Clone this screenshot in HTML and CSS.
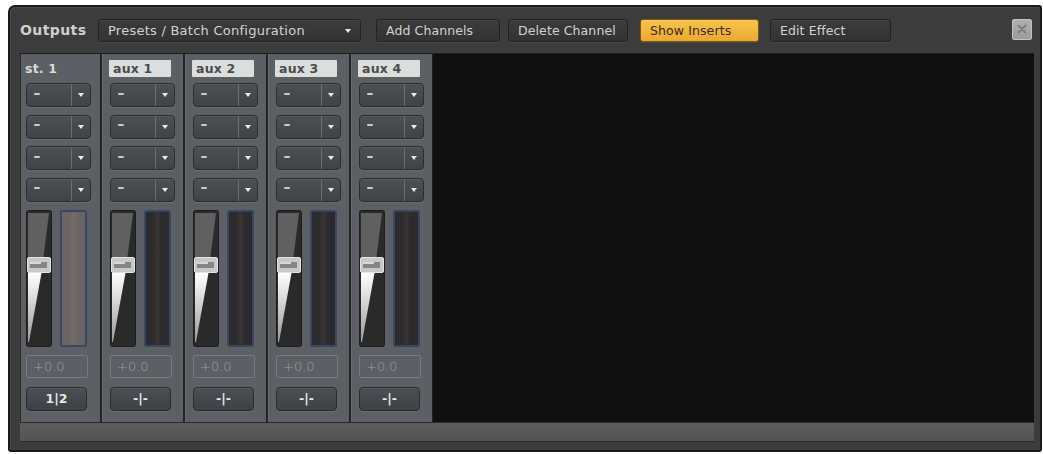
FILE: index.html
```html
<!DOCTYPE html>
<html>
<head>
<meta charset="utf-8">
<link rel="stylesheet" href="styles.css">
</head>
<body>
<div class="window">
  <div class="header">
    <div class="title">Outputs</div>
    <div class="hbtn presets"><span>Presets / Batch Configuration</span><span class="tri"></span></div>
    <div class="hbtn add">Add Channels</div>
    <div class="hbtn del">Delete Channel</div>
    <div class="hbtn show">Show Inserts</div>
    <div class="hbtn edit">Edit Effect</div>
    <div class="close"><svg width="16" height="16" viewBox="0 0 16 16"><path d="M4.5 4.5 L11.5 11.5 M11.5 4.5 L4.5 11.5" stroke="#7d7d7d" stroke-width="2" stroke-linecap="round"/></svg></div>
  </div>
  <div class="main">
    <div class="strips">
      <div class="strip first">
        <div class="label plain">st. 1</div>
        <div class="dd"><span class="dash"></span><span class="ddarrow"></span></div>
        <div class="dd"><span class="dash"></span><span class="ddarrow"></span></div>
        <div class="dd"><span class="dash"></span><span class="ddarrow"></span></div>
        <div class="dd"><span class="dash"></span><span class="ddarrow"></span></div>
        <div class="fader">
          <svg class="track" width="26" height="137" viewBox="0 0 26 137"><defs><linearGradient id="w1" x1="0" y1="0" x2="0" y2="1"><stop offset="0" stop-color="#ffffff"/><stop offset="1" stop-color="#9a9a9a"/></linearGradient></defs><rect x="0.5" y="0.5" width="25" height="136" rx="2" fill="#2a2a2a" stroke="#1d1d1d"/><polygon points="2,3 23,3 17.5,47 2,47" fill="#606060"/><polygon points="2,63 15.5,63 3,132 2,132" fill="url(#w1)"/><rect x="1.5" y="47.5" width="23" height="15" rx="1.5" fill="#c8c8c8" stroke="#e4e4e4"/><rect x="4" y="52" width="17" height="6" fill="#858585"/><rect x="4" y="52" width="11" height="2" fill="#d8d8d8"/></svg>
          <div class="meter light"><div class="stripe"></div></div>
        </div>
        <div class="val">+0.0</div>
        <div class="btn">1|2</div>
      </div>
      <div class="strip">
        <div class="label">aux 1</div>
        <div class="dd"><span class="dash"></span><span class="ddarrow"></span></div>
        <div class="dd"><span class="dash"></span><span class="ddarrow"></span></div>
        <div class="dd"><span class="dash"></span><span class="ddarrow"></span></div>
        <div class="dd"><span class="dash"></span><span class="ddarrow"></span></div>
        <div class="fader">
          <svg class="track" width="26" height="137" viewBox="0 0 26 137"><defs><linearGradient id="w2" x1="0" y1="0" x2="0" y2="1"><stop offset="0" stop-color="#ffffff"/><stop offset="1" stop-color="#9a9a9a"/></linearGradient></defs><rect x="0.5" y="0.5" width="25" height="136" rx="2" fill="#2a2a2a" stroke="#1d1d1d"/><polygon points="2,3 23,3 17.5,47 2,47" fill="#606060"/><polygon points="2,63 15.5,63 3,132 2,132" fill="url(#w2)"/><rect x="1.5" y="47.5" width="23" height="15" rx="1.5" fill="#c8c8c8" stroke="#e4e4e4"/><rect x="4" y="52" width="17" height="6" fill="#858585"/><rect x="4" y="52" width="11" height="2" fill="#d8d8d8"/></svg>
          <div class="meter"><div class="stripe"></div></div>
        </div>
        <div class="val">+0.0</div>
        <div class="btn">-|-</div>
      </div>
      <div class="strip">
        <div class="label">aux 2</div>
        <div class="dd"><span class="dash"></span><span class="ddarrow"></span></div>
        <div class="dd"><span class="dash"></span><span class="ddarrow"></span></div>
        <div class="dd"><span class="dash"></span><span class="ddarrow"></span></div>
        <div class="dd"><span class="dash"></span><span class="ddarrow"></span></div>
        <div class="fader">
          <svg class="track" width="26" height="137" viewBox="0 0 26 137"><defs><linearGradient id="w3" x1="0" y1="0" x2="0" y2="1"><stop offset="0" stop-color="#ffffff"/><stop offset="1" stop-color="#9a9a9a"/></linearGradient></defs><rect x="0.5" y="0.5" width="25" height="136" rx="2" fill="#2a2a2a" stroke="#1d1d1d"/><polygon points="2,3 23,3 17.5,47 2,47" fill="#606060"/><polygon points="2,63 15.5,63 3,132 2,132" fill="url(#w3)"/><rect x="1.5" y="47.5" width="23" height="15" rx="1.5" fill="#c8c8c8" stroke="#e4e4e4"/><rect x="4" y="52" width="17" height="6" fill="#858585"/><rect x="4" y="52" width="11" height="2" fill="#d8d8d8"/></svg>
          <div class="meter"><div class="stripe"></div></div>
        </div>
        <div class="val">+0.0</div>
        <div class="btn">-|-</div>
      </div>
      <div class="strip">
        <div class="label">aux 3</div>
        <div class="dd"><span class="dash"></span><span class="ddarrow"></span></div>
        <div class="dd"><span class="dash"></span><span class="ddarrow"></span></div>
        <div class="dd"><span class="dash"></span><span class="ddarrow"></span></div>
        <div class="dd"><span class="dash"></span><span class="ddarrow"></span></div>
        <div class="fader">
          <svg class="track" width="26" height="137" viewBox="0 0 26 137"><defs><linearGradient id="w4" x1="0" y1="0" x2="0" y2="1"><stop offset="0" stop-color="#ffffff"/><stop offset="1" stop-color="#9a9a9a"/></linearGradient></defs><rect x="0.5" y="0.5" width="25" height="136" rx="2" fill="#2a2a2a" stroke="#1d1d1d"/><polygon points="2,3 23,3 17.5,47 2,47" fill="#606060"/><polygon points="2,63 15.5,63 3,132 2,132" fill="url(#w4)"/><rect x="1.5" y="47.5" width="23" height="15" rx="1.5" fill="#c8c8c8" stroke="#e4e4e4"/><rect x="4" y="52" width="17" height="6" fill="#858585"/><rect x="4" y="52" width="11" height="2" fill="#d8d8d8"/></svg>
          <div class="meter"><div class="stripe"></div></div>
        </div>
        <div class="val">+0.0</div>
        <div class="btn">-|-</div>
      </div>
      <div class="strip">
        <div class="label">aux 4</div>
        <div class="dd"><span class="dash"></span><span class="ddarrow"></span></div>
        <div class="dd"><span class="dash"></span><span class="ddarrow"></span></div>
        <div class="dd"><span class="dash"></span><span class="ddarrow"></span></div>
        <div class="dd"><span class="dash"></span><span class="ddarrow"></span></div>
        <div class="fader">
          <svg class="track" width="26" height="137" viewBox="0 0 26 137"><defs><linearGradient id="w5" x1="0" y1="0" x2="0" y2="1"><stop offset="0" stop-color="#ffffff"/><stop offset="1" stop-color="#9a9a9a"/></linearGradient></defs><rect x="0.5" y="0.5" width="25" height="136" rx="2" fill="#2a2a2a" stroke="#1d1d1d"/><polygon points="2,3 23,3 17.5,47 2,47" fill="#606060"/><polygon points="2,63 15.5,63 3,132 2,132" fill="url(#w5)"/><rect x="1.5" y="47.5" width="23" height="15" rx="1.5" fill="#c8c8c8" stroke="#e4e4e4"/><rect x="4" y="52" width="17" height="6" fill="#858585"/><rect x="4" y="52" width="11" height="2" fill="#d8d8d8"/></svg>
          <div class="meter"><div class="stripe"></div></div>
        </div>
        <div class="val">+0.0</div>
        <div class="btn">-|-</div>
      </div>
      <div class="empty"></div>
    </div>
    <div class="bottombar"></div>
  </div>
</div>
</body>
</html>
```
FILE: styles.css
```css
* { box-sizing: border-box; }
html, body { margin: 0; padding: 0; }
body {
  background: #ffffff;
  width: 1043px;
  height: 454px;
  overflow: hidden;
  font-family: "DejaVu Sans", "Liberation Sans", sans-serif;
}
.window {
  margin: 5px 0 0 8px;
  width: 1034px;
  height: 447px;
  background: #3c3c3c;
  border: 2px solid #1a1a1a;
  border-radius: 7px 3px 3px 3px;
  display: flex;
  flex-direction: column;
  box-shadow: inset 1px 1px 0 #4a4a4a;
}
.header {
  height: 46px;
  flex: none;
  display: flex;
  align-items: center;
  padding-left: 10px;
  padding-right: 6px;
}
.title {
  width: 78px;
  font-weight: bold;
  font-size: 14px;
  color: #cfcfcf;
  letter-spacing: 0.4px;
}
.hbtn {
  height: 23px;
  border: 1px solid #222222;
  border-radius: 3px;
  background: linear-gradient(#3b3b3b, #333333);
  box-shadow: 0 1px 0 rgba(255,255,255,0.07), inset 0 1px 0 rgba(255,255,255,0.04);
  color: #d2d2d2;
  font-size: 12.5px;
  line-height: 21px;
  padding-left: 9px;
  margin-right: 9px;
  white-space: nowrap;
  letter-spacing: 0.1px;
}
.presets {
  width: 263px;
  display: flex;
  justify-content: space-between;
  align-items: center;
  padding-right: 9px;
  margin-right: 15px;
  font-size: 13px;
  letter-spacing: 0.25px;
}
.tri {
  width: 0; height: 0;
  border-left: 3.5px solid transparent;
  border-right: 3.5px solid transparent;
  border-top: 4px solid #e6e6e6;
  margin-top: 2px;
}
.add { width: 124px; margin-right: 8px; }
.del { width: 120px; margin-right: 12px; }
.show {
  width: 119px;
  margin-right: 11px;
  background: linear-gradient(#f8c44c, #eba92f);
  border-color: #7b5a17;
  color: #3b2a0c;
}
.edit { width: 121px; }
.close {
  margin-left: auto;
  margin-right: 2px;
  width: 20px;
  height: 21px;
  background: linear-gradient(#b0b0b0, #9c9c9c);
  border: 1px solid #c2c2c2;
  border-radius: 2px;
  display: flex;
  align-items: center;
  justify-content: center;
  margin-top: -2px;
}
.main {
  margin: 0 6px 0 10px;
  display: flex;
  flex-direction: column;
}
.strips {
  height: 369px;
  display: flex;
  border-top: 1px solid #1c1c1c;
  border-left: 1px solid #2a2a2a;
}
.strip {
  width: 83px;
  flex: none;
  background: #5c6065;
  border-left: 2px solid #222428;
  padding-left: 8px;
  padding-top: 6px;
  display: flex;
  flex-direction: column;
  box-shadow: inset 1px 0 0 #686c71;
}
.strip.first {
  width: 79px;
  border-left: none;
  padding-left: 5px;
  box-shadow: none;
}
.label {
  width: 62px;
  height: 17px;
  margin-left: -1px;
  background: #dcdddd;
  border-radius: 1px;
  color: #4b4b4b;
  font-weight: bold;
  font-size: 12.5px;
  line-height: 17px;
  padding-left: 4px;
  letter-spacing: 0.2px;
}
.label.plain {
  background: transparent;
  color: #d8dadc;
  padding-left: 0;
}
.dd {
  width: 65px;
  height: 24px;
  margin-top: 7.5px;
  border: 1px solid #2b2d30;
  border-radius: 4px;
  background: linear-gradient(#4d5054, #3f4246);
  box-shadow: 0 1px 0 rgba(255,255,255,0.08), inset 0 1px 0 rgba(255,255,255,0.06);
  display: flex;
  align-items: center;
  position: relative;
}
.label + .dd { margin-top: 6px; }
.dash {
  width: 6px;
  height: 2px;
  border-radius: 1px;
  background: #c9cbcd;
  margin-left: 7px;
  margin-top: -3px;
}
.ddarrow {
  margin-left: auto;
  width: 19px;
  height: 100%;
  border-left: 1px solid #6b6e72;
  display: flex;
  align-items: center;
  justify-content: center;
}
.ddarrow::after {
  content: "";
  width: 0; height: 0;
  border-left: 3.5px solid transparent;
  border-right: 3.5px solid transparent;
  border-top: 4px solid #eeeeee;
}
.fader {
  margin-top: 8.5px;
  display: flex;
  gap: 8px;
  height: 137px;
}
.track { display: block; }
.meter {
  width: 27px;
  height: 137px;
  border: 2px solid #394765;
  border-radius: 2px;
  background: #2c2a2d;
  display: flex;
  justify-content: center;
}
.meter .stripe {
  width: 9px;
  background: linear-gradient(90deg, #2c2a2d, #393435, #2c2a2d);
}
.meter.light { background: #6a6462; }
.meter.light .stripe { background: linear-gradient(90deg, #6a6462, #756d6a, #6a6462); }
.val {
  margin-top: 8px;
  width: 62px;
  height: 23px;
  border: 1px solid #777b80;
  border-radius: 2px;
  color: #9a9ea3;
  font-size: 13px;
  line-height: 21px;
  padding-left: 6px;
  font-weight: 300;
}
.btn {
  margin-top: 9px;
  width: 61px;
  height: 24px;
  border: 1px solid #2a2c2f;
  border-radius: 4px;
  background: linear-gradient(#4c4f53, #3d4044);
  box-shadow: 0 1px 0 rgba(255,255,255,0.08), inset 0 1px 0 rgba(255,255,255,0.06);
  color: #e6e6e6;
  font-size: 12.5px;
  font-weight: bold;
  line-height: 22px;
  text-align: center;
}
.empty {
  flex: 1;
  background: #0f0f0f;
  border-left: 1px solid #222;
}
.bottombar {
  height: 20px;
  background: linear-gradient(#5c5c5c, #535353);
  border-top: 1px solid #2a2a2a;
  border-bottom: 1px solid #2c2c2c;
}
```
